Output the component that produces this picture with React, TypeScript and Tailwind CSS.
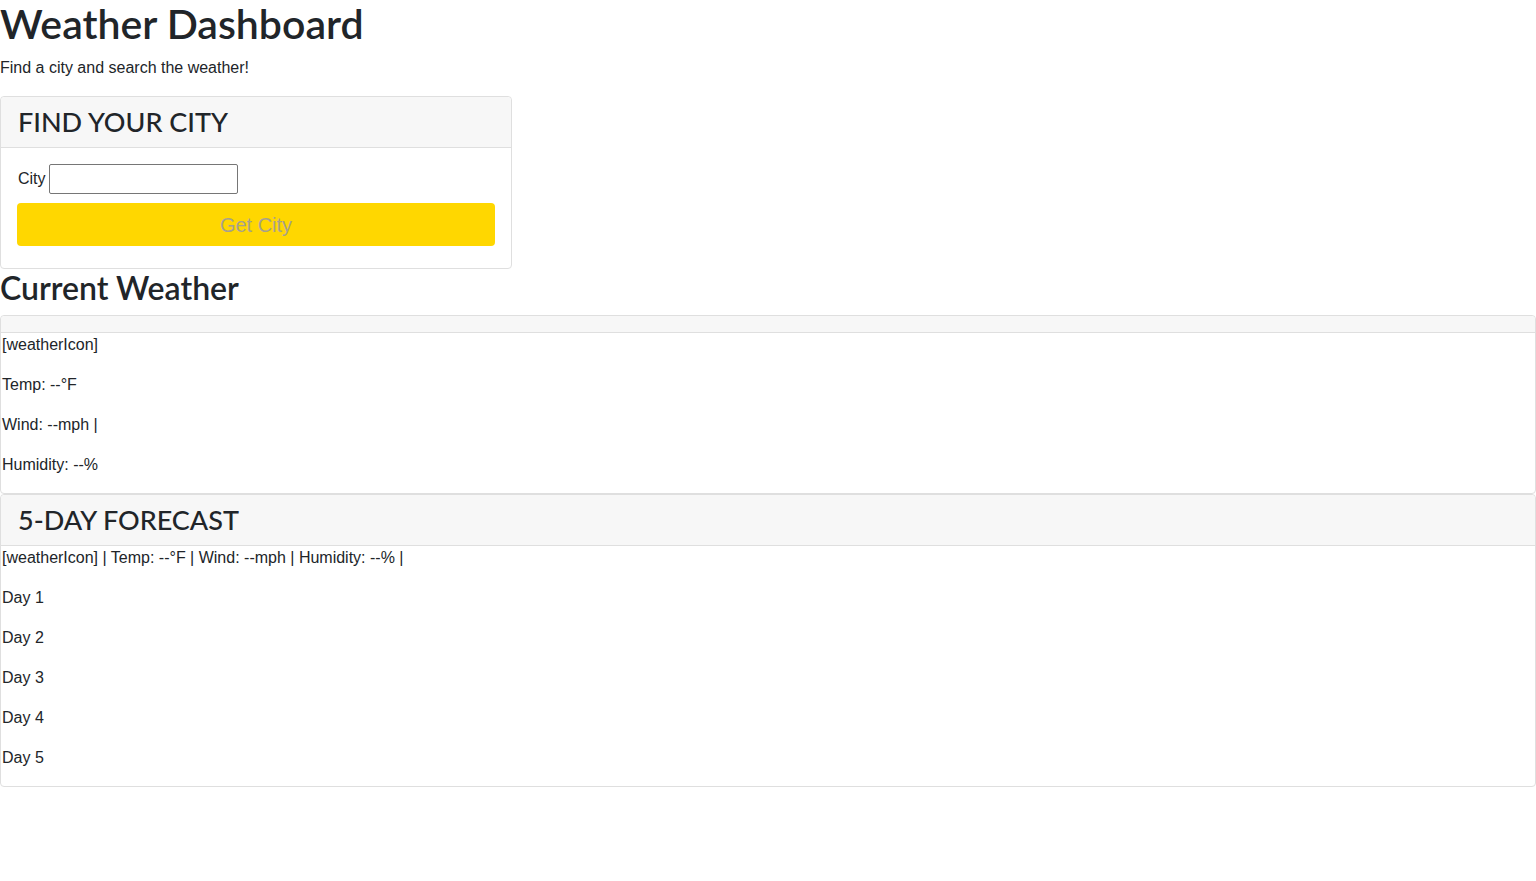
import React from "react";

const forecastDays = ["Day 1", "Day 2", "Day 3", "Day 4", "Day 5"];

const App = () => {
  return (
    <div className="min-h-[881px] w-full bg-white text-[#212529] font-['Liberation_Sans',Arial,sans-serif]">
      <h1 className="text-[41px] leading-[48px] font-semibold font-['Lato',sans-serif] mb-2">
        Weather Dashboard
      </h1>
      <p className="text-base leading-6 mb-4">
        Find a city and search the weather!
      </p>

      {/* search card */}
      <section className="w-[512px] border border-[#dfdfdf] rounded-[4px]">
        <div className="h-[51px] flex items-center px-[17px] bg-[#f7f7f7] border-b border-[#dfdfdf] rounded-t-[4px]">
          <h3 className="text-[27px] leading-8 font-medium font-['Lato',sans-serif]">
            FIND YOUR CITY
          </h3>
        </div>
        <div className="p-4">
          <div className="flex items-center">
            <label className="text-base leading-6 mr-[3px] pl-[1px]">City</label>
            <input
              type="text"
              className="w-[189px] h-[30px] border border-[#767676] rounded-[2px] px-1 text-sm"
            />
          </div>
          <button className="mt-[9px] mb-[6px] w-full h-[43px] rounded-[4px] bg-[#ffd700] text-[#a7a18c] text-xl">
            Get City
          </button>
        </div>
      </section>

      <h2 className="text-[32px] leading-[38px] font-semibold font-['Lato',sans-serif] mb-2">
        Current Weather
      </h2>

      {/* current weather card */}
      <section className="w-full border border-[#dfdfdf] rounded-[4px]">
        <div className="h-[17px] bg-[#f7f7f7] border-b border-[#dfdfdf] rounded-t-[4px]" />
        <div className="text-base leading-6 pl-[1px]">
          <p className="mb-4">[weatherIcon]</p>
          <p className="mb-4">Temp: --°F</p>
          <p className="mb-4">Wind: --mph |</p>
          <p className="mb-4">Humidity: --%</p>
        </div>
      </section>

      {/* forecast card */}
      <section className="w-full border border-[#dfdfdf] rounded-[4px]">
        <div className="h-[51px] flex items-center px-[17px] bg-[#f7f7f7] border-b border-[#dfdfdf] rounded-t-[4px]">
          <h3 className="text-[27px] leading-8 font-medium font-['Lato',sans-serif]">
            5-DAY FORECAST
          </h3>
        </div>
        <div className="text-base leading-6 pl-[1px]">
          <p className="mb-4">
            [weatherIcon] | Temp: --°F | Wind: --mph | Humidity: --% |
          </p>
          {forecastDays.map((day) => (
            <p key={day} className="mb-4">
              {day}
            </p>
          ))}
        </div>
      </section>
    </div>
  );
};

export default App;
